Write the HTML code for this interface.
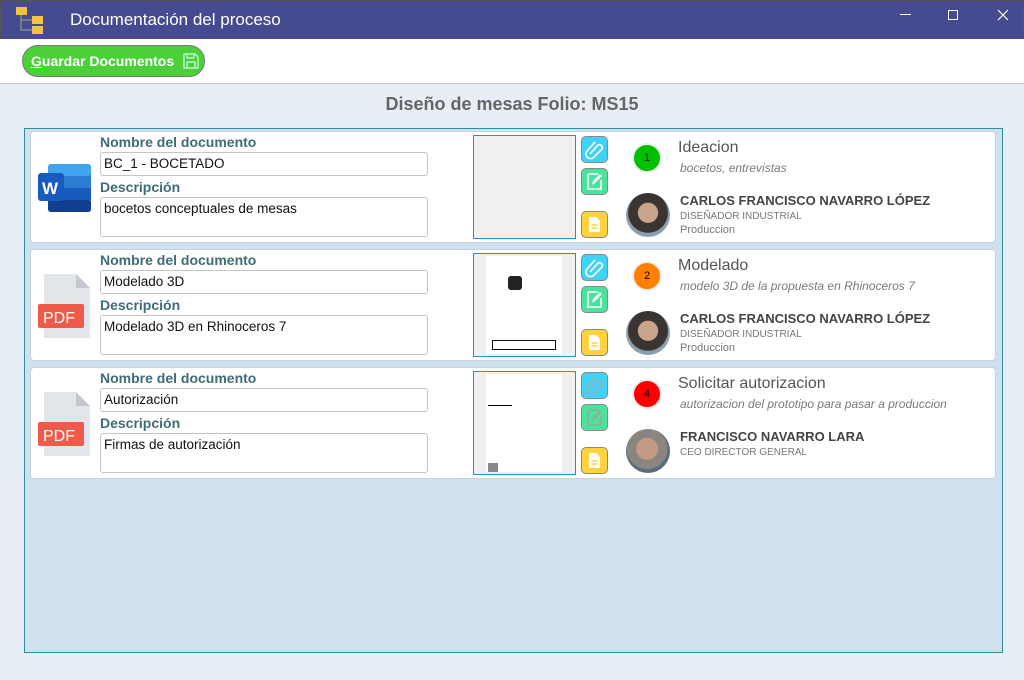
<!DOCTYPE html>
<html><head><meta charset="utf-8"><style>
*{box-sizing:border-box;margin:0;padding:0}
body{width:1024px;height:680px;overflow:hidden;background:#e8eef5;font-family:"Liberation Sans",sans-serif;position:relative}
.abs{position:absolute}
.title{left:0;top:0;width:1024px;height:39px;background:#464a8e;border-top:1px solid #555;border-left:1px solid #555;border-right:1px solid #555}
.tb{left:0;top:39px;width:1024px;height:45px;background:#fff;border-bottom:1px solid #c8c8c8}
.btn{left:22px;top:45px;width:183px;height:32px;border-radius:16px;background:#4bd03a;border:1px solid #777;color:#fff;font-weight:bold;font-size:14px;padding:7px 0 0 8px}
.panel{left:24px;top:128px;width:979px;height:525px;background:#cfe0ee;border:1px solid #2e8f9c}
.card{left:30px;width:966px;height:112px;background:#fff;border:1px solid #c9d2da;border-radius:4px}
.lbl{font-size:14px;font-weight:bold;color:#3e6c77}
.inp{border:1px solid #c4c4c4;border-radius:3px;background:#fff;font-size:13.5px;color:#111;padding:3px 3px}
.thumb{width:103px;height:104px;border:1px solid #1e93c2;background:#f0f0f0}
.ib{width:27px;height:27px;border-radius:5px;border:1px solid #888}
.circ{width:30px;height:30px;border-radius:50%;border:2px solid #eee;font-size:11px;text-align:center;line-height:26px}
.st{font-size:16px;color:#555}
.sub{font-size:12px;font-style:italic;color:#7a7a7a}
.nm{font-size:13px;font-weight:bold;color:#444}
.role{font-size:10px;color:#777}
.dep{font-size:11px;color:#777}
.av{width:44px;height:44px;border-radius:50%;overflow:hidden}
</style></head><body>
<div class="abs title">
<svg class="abs" style="left:14px;top:5px" width="34" height="30"><rect x="1" y="1" width="11" height="8" fill="#f5c242"/><path d="M6 9V24H17M6 14H17" stroke="#888" fill="none" stroke-width="1.5"/><rect x="17" y="10" width="11" height="8" fill="#f5c242"/><rect x="17" y="20" width="11" height="8" fill="#f5c242"/></svg>
<div class="abs" style="left:69px;top:9px;color:#fff;font-size:17px">Documentación del proceso</div>
<div class="abs" style="left:899px;top:13px;width:11px;height:1px;background:#fff"></div>
<div class="abs" style="left:947px;top:9px;width:10px;height:10px;border:1px solid #fff"></div>
<svg class="abs" style="left:996px;top:8px" width="12" height="12"><path d="M1 1L11 11M11 1L1 11" stroke="#fff" stroke-width="1.2"/></svg>
</div>
<div class="abs tb"></div>
<div class="abs btn"><u>G</u>uardar Documentos
<svg class="abs" style="left:160px;top:7px" width="16" height="16"><path d="M1 1H12L15 4V15H1Z M4 1V5H11V1 M4 15V9H12V15" stroke="#cfe" fill="none" stroke-width="1.2"/></svg></div>
<div class="abs" style="left:0;top:94px;width:1024px;text-align:center;font-size:18px;font-weight:bold;color:#666">Diseño de mesas Folio: MS15</div>
<div class="abs panel"></div>

<div class="abs card" style="top:131px"></div>
<div class="abs card" style="top:249px"></div>
<div class="abs card" style="top:367px"></div>

<svg class="abs" style="left:38px;top:164px" width="54" height="48"><rect x="10" y="0" width="43" height="48" rx="3" fill="#2b7cd3"/><rect x="10" y="0" width="43" height="12" rx="3" fill="#41a5ee"/><rect x="10" y="24" width="43" height="12" fill="#185abd"/><rect x="10" y="36" width="43" height="12" rx="3" fill="#103f91"/><rect x="0" y="9" width="26" height="28" rx="3" fill="#185abd"/><text x="4" y="30" fill="#fff" font-size="17" font-weight="bold" font-family="Liberation Sans">W</text></svg>

<svg class="abs" style="left:38px;top:274px" width="54" height="66"><path d="M6 0H38L52 14V64H6Z" fill="#e2e5e9"/><path d="M38 0V14H52Z" fill="#c4c8ce"/><rect x="0" y="30" width="46" height="24" rx="2" fill="#ef5b4a"/><text x="5" y="49" fill="#fff" font-size="16" font-family="Liberation Sans">PDF</text></svg>
<svg class="abs" style="left:38px;top:392px" width="54" height="66"><path d="M6 0H38L52 14V64H6Z" fill="#e2e5e9"/><path d="M38 0V14H52Z" fill="#c4c8ce"/><rect x="0" y="30" width="46" height="24" rx="2" fill="#ef5b4a"/><text x="5" y="49" fill="#fff" font-size="16" font-family="Liberation Sans">PDF</text></svg>

<div class="abs lbl" style="left:100px;top:134px">Nombre del documento</div>
<div class="abs inp" style="left:100px;top:152px;width:328px;height:24px">BC_1 - BOCETADO</div>
<div class="abs lbl" style="left:100px;top:179px">Descripción</div>
<div class="abs inp" style="left:100px;top:197px;width:328px;height:40px">bocetos conceptuales de mesas</div>

<div class="abs lbl" style="left:100px;top:252px">Nombre del documento</div>
<div class="abs inp" style="left:100px;top:270px;width:328px;height:24px">Modelado 3D</div>
<div class="abs lbl" style="left:100px;top:297px">Descripción</div>
<div class="abs inp" style="left:100px;top:315px;width:328px;height:40px">Modelado 3D en Rhinoceros 7</div>

<div class="abs lbl" style="left:100px;top:370px">Nombre del documento</div>
<div class="abs inp" style="left:100px;top:388px;width:328px;height:24px">Autorización</div>
<div class="abs lbl" style="left:100px;top:415px">Descripción</div>
<div class="abs inp" style="left:100px;top:433px;width:328px;height:40px">Firmas de autorización</div>

<div class="abs thumb" style="left:473px;top:135px"></div>
<div class="abs thumb" style="left:473px;top:253px"><div class="abs" style="left:12px;top:2px;width:76px;height:98px;background:#fff"><div class="abs" style="left:22px;top:20px;width:14px;height:14px;background:#222;border-radius:3px"></div><div class="abs" style="left:6px;top:84px;width:64px;height:10px;border:1px solid #111"></div></div></div>
<div class="abs thumb" style="left:473px;top:371px"><div class="abs" style="left:12px;top:2px;width:76px;height:98px;background:#fff"><div class="abs" style="left:2px;top:31px;width:24px;height:1px;background:#000"></div><div class="abs" style="left:2px;top:89px;width:10px;height:9px;background:#888"></div></div></div>

<div class="abs ib" style="left:581px;top:136px;background:#3fd4f7"><svg width="25" height="25"><path d="M8 17L16 8A3 3 0 0 1 20 12L12 20A4.5 4.5 0 0 1 5 14L13 5" stroke="#fff" fill="none" stroke-width="1.6"/></svg></div>
<div class="abs ib" style="left:581px;top:168px;background:#48e39c"><svg width="25" height="25"><path d="M6 5H16M6 5V20H19V11" stroke="#fff" fill="none" stroke-width="1.6"/><path d="M10 16L11 12L18 5L20 7L13 14Z" fill="#fff"/></svg></div>
<div class="abs ib" style="left:581px;top:211px;background:#fdd23c"><svg width="25" height="25"><path d="M7 5H14L18 9V20H7Z" fill="#fff"/><path d="M9.5 13H15.5M9.5 16H15.5" stroke="#fdd23c" stroke-width="1.4"/></svg></div>

<div class="abs ib" style="left:581px;top:254px;background:#3fd4f7"><svg width="25" height="25"><path d="M8 17L16 8A3 3 0 0 1 20 12L12 20A4.5 4.5 0 0 1 5 14L13 5" stroke="#fff" fill="none" stroke-width="1.6"/></svg></div>
<div class="abs ib" style="left:581px;top:286px;background:#48e39c"><svg width="25" height="25"><path d="M6 5H16M6 5V20H19V11" stroke="#fff" fill="none" stroke-width="1.6"/><path d="M10 16L11 12L18 5L20 7L13 14Z" fill="#fff"/></svg></div>
<div class="abs ib" style="left:581px;top:329px;background:#fdd23c"><svg width="25" height="25"><path d="M7 5H14L18 9V20H7Z" fill="#fff"/><path d="M9.5 13H15.5M9.5 16H15.5" stroke="#fdd23c" stroke-width="1.4"/></svg></div>

<div class="abs ib" style="left:581px;top:372px;background:#3fd4f7"><svg width="25" height="25"><path d="M8 17L16 8A3 3 0 0 1 20 12L12 20A4.5 4.5 0 0 1 5 14L13 5" stroke="#9ab" fill="none" stroke-width="1.6"/></svg></div>
<div class="abs ib" style="left:581px;top:404px;background:#48e39c"><svg width="25" height="25"><path d="M6 5H16M6 5V20H19V11" stroke="#9a9" fill="none" stroke-width="1.6"/><path d="M10 16L11 12L18 5L20 7L13 14Z" fill="#9a9"/></svg></div>
<div class="abs ib" style="left:581px;top:447px;background:#fdd23c"><svg width="25" height="25"><path d="M7 5H14L18 9V20H7Z" fill="#fff"/><path d="M9.5 13H15.5M9.5 16H15.5" stroke="#fdd23c" stroke-width="1.4"/></svg></div>

<div class="abs circ" style="left:632px;top:143px;background:#00c000">1</div>
<div class="abs st" style="left:678px;top:139px">Ideacion</div>
<div class="abs sub" style="left:680px;top:161px">bocetos, entrevistas</div>
<div class="abs av" style="left:626px;top:193px;background:radial-gradient(circle at 50% 45%,#c9a38a 0 30%,#3a3430 32% 60%,#8aa0b0 62%)"></div>
<div class="abs nm" style="left:680px;top:193px">CARLOS FRANCISCO NAVARRO LÓPEZ</div>
<div class="abs role" style="left:680px;top:211px">DISEÑADOR INDUSTRIAL</div>
<div class="abs dep" style="left:680px;top:224px">Produccion</div>

<div class="abs circ" style="left:632px;top:261px;background:#ff8000">2</div>
<div class="abs st" style="left:678px;top:257px">Modelado</div>
<div class="abs sub" style="left:680px;top:279px">modelo 3D de la propuesta en Rhinoceros 7</div>
<div class="abs av" style="left:626px;top:311px;background:radial-gradient(circle at 50% 45%,#c9a38a 0 30%,#3a3430 32% 60%,#8aa0b0 62%)"></div>
<div class="abs nm" style="left:680px;top:311px">CARLOS FRANCISCO NAVARRO LÓPEZ</div>
<div class="abs role" style="left:680px;top:329px">DISEÑADOR INDUSTRIAL</div>
<div class="abs dep" style="left:680px;top:342px">Produccion</div>

<div class="abs circ" style="left:632px;top:379px;background:#ff0000">4</div>
<div class="abs st" style="left:678px;top:375px">Solicitar autorizacion</div>
<div class="abs sub" style="left:680px;top:397px">autorizacion del prototipo para pasar a produccion</div>
<div class="abs av" style="left:626px;top:429px;background:radial-gradient(circle at 48% 45%,#c49a85 0 32%,#8a8580 34% 60%,#5a6a80 62%)"></div>
<div class="abs nm" style="left:680px;top:429px">FRANCISCO NAVARRO LARA</div>
<div class="abs role" style="left:680px;top:447px">CEO DIRECTOR GENERAL</div>
</body></html>
